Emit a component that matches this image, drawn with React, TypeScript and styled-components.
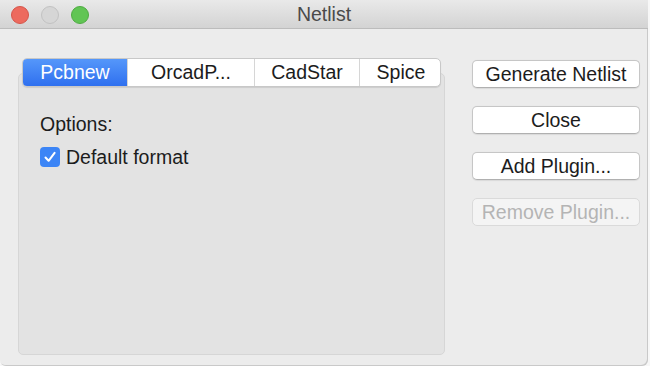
import React from 'react';
import styled, { createGlobalStyle } from 'styled-components';

type Tab = {
  label: string;
  width: number;
};

const tabs: Tab[] = [
  { label: 'Pcbnew', width: 104 },
  { label: 'OrcadP...', width: 127 },
  { label: 'CadStar', width: 105 },
  { label: 'Spice', width: 83 },
];

const actions = [
  { label: 'Generate Netlist', disabled: false },
  { label: 'Close', disabled: false },
  { label: 'Add Plugin...', disabled: false },
  { label: 'Remove Plugin...', disabled: true },
];

const App = () => (
  <>
    <GlobalStyle />
    <Window>
      <TitleBar>
        <Lights>
          <Light color="#ed6a5e" edge="#d5554a" />
          <Light color="#d6d6d6" edge="#c2c2c2" />
          <Light color="#61c554" edge="#4eab42" />
        </Lights>
        <Title>Netlist</Title>
        <span />
      </TitleBar>
      <Body>
        <TabView>
          <Segmented>
            {tabs.map(({ label, width }, index) => (
              <Segment key={label} width={width} active={index === 0}>
                {label}
              </Segment>
            ))}
          </Segmented>
          <Panel>
            <Label>Options:</Label>
            <CheckRow>
              <CheckBox>
                <svg width="14" height="14" viewBox="0 0 14 14">
                  <path d="M2.5 7.5 L5.6 10.8 L11.6 2.8" fill="none" stroke="#fff" strokeWidth="2" strokeLinecap="round" strokeLinejoin="round" />
                </svg>
              </CheckBox>
              <span>Default format</span>
            </CheckRow>
          </Panel>
        </TabView>
        <Actions>
          {actions.map(({ label, disabled }) => (
            <Button key={label} disabled={disabled}>{label}</Button>
          ))}
        </Actions>
      </Body>
    </Window>
  </>
);

const GlobalStyle = createGlobalStyle`
  html, body {
    margin: 0;
    padding: 0;
    background: #f7f7f7;
  }
  body {
    font-family: 'Liberation Sans', Arial, sans-serif;
    color: #1c1c1c;
  }
`;

const Window = styled.div`
  width: 648px;
  height: 366px;
  background: #ececec;
  border-radius: 0 0 6px 6px;
  box-shadow: inset -1px -1px 0 #c9c9c9;
  display: flex;
  flex-direction: column;
  overflow: hidden;
`;

const TitleBar = styled.div`
  height: 28px;
  flex: none;
  display: grid;
  grid-template-columns: 1fr auto 1fr;
  align-items: center;
  background: linear-gradient(#e9e9e9, #d3d3d3);
  border-bottom: 1px solid #bcbcbc;
`;

const Lights = styled.div`
  display: flex;
  gap: 12px;
  padding-left: 11px;
  padding-top: 1px;
`;

const Light = styled.span<{ color: string; edge: string }>`
  width: 18px;
  height: 18px;
  box-sizing: border-box;
  border-radius: 50%;
  background: ${({ color }) => color};
  border: 1px solid ${({ edge }) => edge};
`;

const Title = styled.div`
  font-size: 19.5px;
  color: #4a4a4a;
  padding-top: 1px;
`;

const Body = styled.div`
  display: flex;
  gap: 27px;
  padding: 29px 0 0 18px;
`;

const TabView = styled.div`
  width: 427px;
  display: flex;
  flex-direction: column;
`;

const Segmented = styled.div`
  position: relative;
  z-index: 1;
  margin: 0 4px -14px;
  height: 29px;
  display: flex;
  box-sizing: border-box;
  background: #fff;
  border: 1px solid #c8c8c8;
  border-radius: 5px;
  box-shadow: 0 1px 1px rgba(0, 0, 0, 0.1);
  overflow: hidden;
`;

const Segment = styled.div<{ width: number; active: boolean }>`
  flex: 0 0 ${({ width }) => width}px;
  display: flex;
  align-items: center;
  justify-content: center;
  font-size: 19.5px;
  box-sizing: border-box;
  border-left: 1px solid #d6d6d6;
  &:first-child {
    border-left: none;
  }
  ${({ active }) => active && `
    color: #fff;
    background: linear-gradient(#5597fa, #2f70ef);
  `}
`;

const Panel = styled.div`
  height: 282px;
  box-sizing: border-box;
  background: #e3e3e3;
  border: 1px solid #d6d6d6;
  border-radius: 5px;
  padding: 39px 21px 0;
  display: flex;
  flex-direction: column;
  gap: 12px;
`;

const Label = styled.div`
  font-size: 19.5px;
  line-height: 22px;
`;

const CheckRow = styled.label`
  display: flex;
  align-items: center;
  gap: 6px;
  height: 20px;
  font-size: 19.5px;
`;

const CheckBox = styled.span`
  width: 20px;
  height: 20px;
  border-radius: 4px;
  background: #3c85f6;
  display: flex;
  align-items: center;
  justify-content: center;
`;

const Actions = styled.div`
  width: 168px;
  padding-top: 2px;
  display: flex;
  flex-direction: column;
  gap: 18px;
`;

const Button = styled.button`
  height: 28px;
  margin: 0;
  padding: 0;
  font-family: inherit;
  font-size: 19.5px;
  color: #1c1c1c;
  background: #fff;
  border: 1px solid #c6c6c6;
  border-bottom-color: #b0b0b0;
  border-radius: 5px;
  box-shadow: 0 0.5px 1px rgba(0, 0, 0, 0.08);
  &:disabled {
    color: #b4b4b4;
    background: #f4f4f4;
    border-color: #dadada;
    box-shadow: none;
  }
`;

export default App;
